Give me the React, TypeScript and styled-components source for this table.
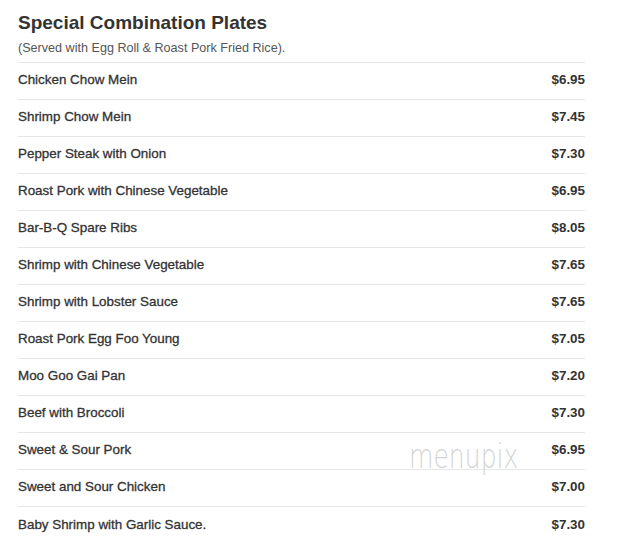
import React from "react";
import styled, { createGlobalStyle } from "styled-components";

const Global = createGlobalStyle`
  html, body { margin: 0; padding: 0; background: #fff; }
  body { font-family: "Liberation Sans", Arial, sans-serif; }
`;

const Page = styled.div`
  position: relative;
  width: 642px;
  height: 540px;
  overflow: hidden;
  padding: 11px 57px 0 18px;
  box-sizing: border-box;
`;

const Title = styled.h2`
  margin: 0;
  font-size: 19px;
  font-weight: bold;
  color: #333;
  line-height: 24px;
`;

const Subtitle = styled.p`
  margin: 5px 0 0;
  font-size: 12.6px;
  color: #555;
  line-height: 16px;
  padding-bottom: 6px;
  border-bottom: 1px solid #e6e6e6;
`;

const List = styled.div`
  display: flex;
  flex-direction: column;
`;

const Row = styled.div<{ $last?: boolean }>`
  display: flex;
  justify-content: space-between;
  align-items: center;
  box-sizing: border-box;
  height: 37px;
  padding-bottom: 3px;
  border-bottom: ${(p) => (p.$last ? "none" : "1px solid #e6e6e6")};
  font-size: 13.4px;
  color: #333;
`;

const Name = styled.span`
  font-weight: normal;
  -webkit-text-stroke: 0.3px #333;
`;

const Price = styled.span`
  font-weight: bold;
`;

const Watermark = styled.div`
  position: absolute;
  left: 409px;
  top: 440px;
  font-family: "DejaVu Sans", sans-serif;
  font-weight: 200;
  font-size: 33px;
  line-height: 33px;
  color: #d4d4d4;
  transform: scaleX(0.76);
  transform-origin: left top;
`;

const items: [string, string][] = [
  ["Chicken Chow Mein", "$6.95"],
  ["Shrimp Chow Mein", "$7.45"],
  ["Pepper Steak with Onion", "$7.30"],
  ["Roast Pork with Chinese Vegetable", "$6.95"],
  ["Bar-B-Q Spare Ribs", "$8.05"],
  ["Shrimp with Chinese Vegetable", "$7.65"],
  ["Shrimp with Lobster Sauce", "$7.65"],
  ["Roast Pork Egg Foo Young", "$7.05"],
  ["Moo Goo Gai Pan", "$7.20"],
  ["Beef with Broccoli", "$7.30"],
  ["Sweet & Sour Pork", "$6.95"],
  ["Sweet and Sour Chicken", "$7.00"],
  ["Baby Shrimp with Garlic Sauce.", "$7.30"],
];

export default function App() {
  return (
    <>
      <Global />
      <Page>
        <Title>Special Combination Plates</Title>
        <Subtitle>(Served with Egg Roll &amp; Roast Pork Fried Rice).</Subtitle>
        <List>
          {items.map(([n, p], i) => (
            <Row key={n} $last={i === items.length - 1}>
              <Name>{n}</Name>
              <Price>{p}</Price>
            </Row>
          ))}
        </List>
        <Watermark>menupix</Watermark>
      </Page>
    </>
  );
}
